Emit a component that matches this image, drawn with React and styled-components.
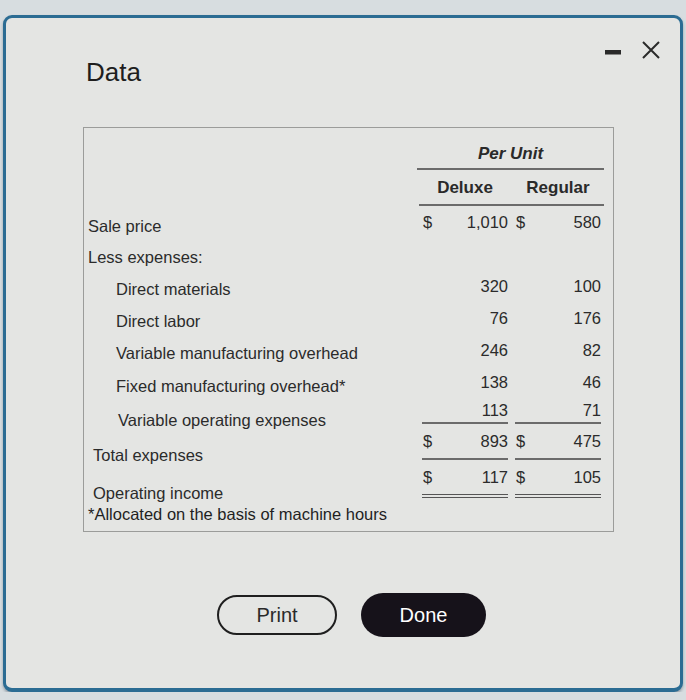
import React from "react";
import styled, { createGlobalStyle } from "styled-components";

const GlobalStyle = createGlobalStyle`
  body {
    margin: 0;
    background: #d7dde0;
    font-family: "Liberation Sans", Arial, sans-serif;
    color: #262626;
  }
`;

const rows = [
  { label: "Sale price", indent: 0, drop: 4, h: 32, d: ["1,010", true], r: ["580", true] },
  { label: "Less expenses:", indent: 0, drop: 3, h: 32 },
  { label: "Direct materials", indent: 28, drop: 3, h: 32, d: ["320"], r: ["100"] },
  { label: "Direct labor", indent: 28, drop: 3, h: 32, d: ["76"], r: ["176"] },
  { label: "Variable manufacturing overhead", indent: 28, drop: 3, h: 32, d: ["246"], r: ["82"] },
  { label: "Fixed manufacturing overhead*", indent: 28, drop: 4, h: 32, d: ["138"], r: ["46"] },
  { label: "Variable operating expenses", indent: 30, drop: 10, h: 24, d: ["113"], r: ["71"], line: "single" },
  { label: "Total expenses", indent: 5, drop: 14, h: 34, d: ["893", true], r: ["475", true], line: "single" },
  { label: "Operating income", indent: 5, drop: 16, h: 34, d: ["117", true], r: ["105", true], line: "double" },
];

const App = () => {
  return (
    <>
      <GlobalStyle />
      <Dialog>
        <Header>
          <Title>Data</Title>
          <Controls>
            <svg width="16" height="8" viewBox="0 0 16 8">
              <rect x="0" y="2" width="16" height="4.5" fill="#2a2a2a" />
            </svg>
            <svg width="20" height="20" viewBox="0 0 20 20">
              <path d="M2 2 L18 18 M18 2 L2 18" stroke="#2a2a2a" strokeWidth="2" fill="none" />
            </svg>
          </Controls>
        </Header>

        <TableBox>
          <Grid>
            <Blank />
            <Group>
              <i>Per Unit</i>
            </Group>
            <Blank />
            <HeadRow>
              <ColHead>Deluxe</ColHead>
              <ColHead>Regular</ColHead>
            </HeadRow>

            {rows.map((row) => (
              <React.Fragment key={row.label}>
                <Label indent={row.indent} drop={row.drop} h={row.h}>
                  {row.label}
                </Label>
                <Amount h={row.h} line={row.line}>
                  {row.d && (
                    <>
                      <span>{row.d[1] ? "$" : ""}</span>
                      <span>{row.d[0]}</span>
                    </>
                  )}
                </Amount>
                <Amount h={row.h} line={row.line}>
                  {row.r && (
                    <>
                      <span>{row.r[1] ? "$" : ""}</span>
                      <span>{row.r[0]}</span>
                    </>
                  )}
                </Amount>
              </React.Fragment>
            ))}
            <Note>*Allocated on the basis of machine hours</Note>
          </Grid>
        </TableBox>

        <Footer>
          <OutlineButton>Print</OutlineButton>
          <SolidButton>Done</SolidButton>
        </Footer>
      </Dialog>
    </>
  );
};

export default App;

const Dialog = styled.div`
  margin: 15px 3px 0 3px;
  height: 670px;
  border: 3px solid #2b6c93;
  border-bottom-width: 4px;
  border-radius: 9px;
  background: #e4e5e3;
  box-shadow: 0 2px 3px rgba(20, 40, 60, 0.35);
`;

const Header = styled.div`
  display: flex;
  justify-content: space-between;
  align-items: flex-start;
  padding: 22px 19px 0 80px;
`;

const Title = styled.div`
  margin-top: 17px;
  font-size: 26px;
  line-height: 30px;
  color: #1e1e1e;
`;

const Controls = styled.div`
  display: flex;
  align-items: center;
  gap: 20px;
  height: 20px;
  svg:first-child {
    margin-top: 4px;
  }
`;

const TableBox = styled.div`
  margin: 40px 0 0 77px;
  width: 531px;
  height: 405px;
  box-sizing: border-box;
  border: 1px solid #9b9c9a;
  padding: 12px 12px 0 4px;
`;

const Grid = styled.div`
  display: grid;
  grid-template-columns: 1fr 86px 86px;
  column-gap: 7px;
  font-size: 16.5px;
`;

const Blank = styled.div``;

const Group = styled.div`
  grid-column: 2 / 4;
  margin: 0 -3px 0 -5px;
  height: 28px;
  line-height: 28px;
  text-align: center;
  font-size: 17px;
  font-weight: bold;
  border-bottom: 2px solid #6b6b6b;
  color: #2a2a2a;
`;

const HeadRow = styled.div`
  grid-column: 2 / 4;
  display: grid;
  grid-template-columns: 86px 86px;
  column-gap: 7px;
  margin: 2px -3px 0 -3px;
  padding: 0 3px;
  border-bottom: 2px solid #6b6b6b;
`;

const ColHead = styled.div`
  height: 32px;
  line-height: 32px;
  text-align: center;
  font-size: 17px;
  font-weight: bold;
  color: #2a2a2a;
`;

const Label = styled.div`
  height: ${(p) => p.h}px;
  line-height: ${(p) => p.h}px;
  padding-left: ${(p) => p.indent}px;
  margin: ${(p) => p.drop}px 0 -${(p) => p.drop}px;
  white-space: nowrap;
  color: #2b2b2b;
`;

const Amount = styled.div`
  display: flex;
  justify-content: space-between;
  height: ${(p) => p.h}px;
  line-height: ${(p) => p.h}px;
  color: #2b2b2b;
  border-bottom: ${(p) =>
    p.line === "double" ? "4px double #555" : p.line === "single" ? "2px solid #6b6b6b" : "none"};
  span:first-child {
    padding-left: 1px;
  }
`;

const Note = styled.div`
  grid-column: 1 / 4;
  margin-top: 6px;
  line-height: 20px;
  color: #1f1f1f;
`;

const Footer = styled.div`
  display: flex;
  align-items: center;
  gap: 24px;
  padding: 61px 0 0 211px;
`;

const OutlineButton = styled.button`
  width: 120px;
  height: 40px;
  box-sizing: border-box;
  border: 2px solid #1f1f1f;
  border-radius: 20px;
  background: transparent;
  font-family: "Liberation Sans", Arial, sans-serif;
  font-size: 20px;
  color: #2a2a2a;
  cursor: pointer;
`;

const SolidButton = styled.button`
  width: 125px;
  height: 44px;
  border: none;
  border-radius: 22px;
  background: #16121a;
  font-family: "Liberation Sans", Arial, sans-serif;
  font-size: 20px;
  color: #ffffff;
  cursor: pointer;
`;
